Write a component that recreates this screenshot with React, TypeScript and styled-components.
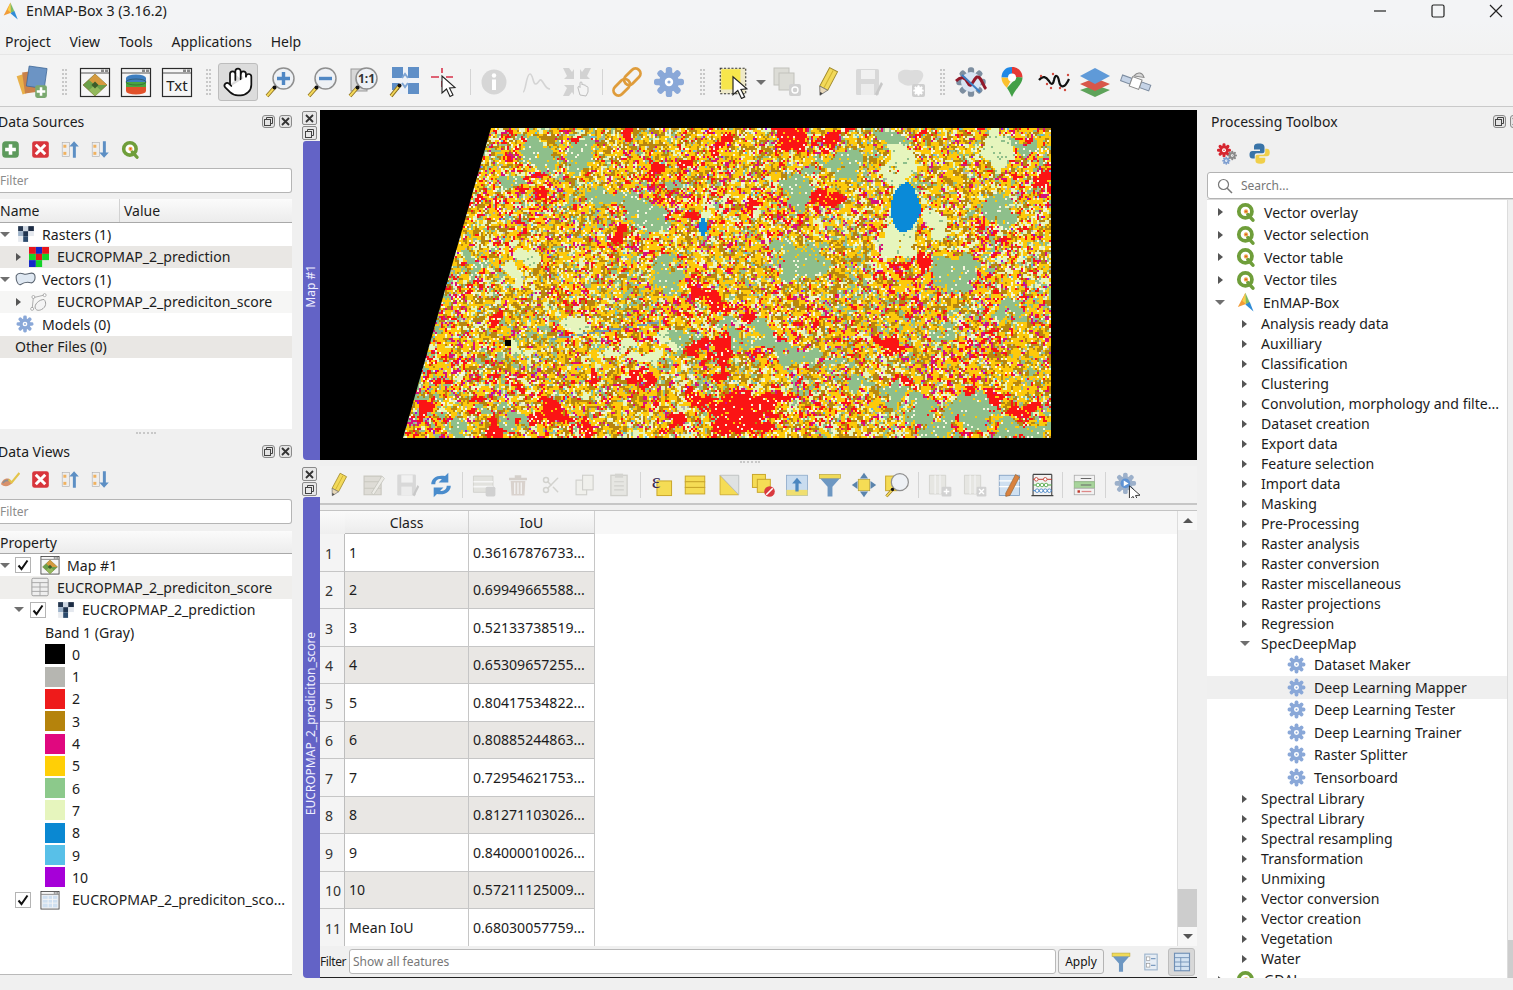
import React, {useEffect, useRef} from 'react'
import styled, {createGlobalStyle} from 'styled-components'
import {Hand, Scissors} from 'lucide-react'

const GlobalStyle = createGlobalStyle`
  html, body { margin: 0; padding: 0; background: #f0f0f0; overflow: hidden; }
  body { font-family: "Noto Sans", "Open Sans", "Liberation Sans", sans-serif; font-size: 14.1px; color: #1c1c1c; }
`

const Window = styled.div`
  width: 1513px;
  height: 990px;
  display: flex;
  flex-direction: column;
  overflow: hidden;
  background: #f0f0f0;
`

const TitleBar = styled.div`
  width: 1525px;
  height: 21px;
  display: flex;
  align-items: center;
  background: #f3f4f6;
  font-size: 14.2px;
`
const TitleText = styled.span`
  margin-left: 6px;
  flex: 1;
`
const WinBtn = styled.div`
  width: 58px;
  display: flex;
  justify-content: center;
`
const MenuBar = styled.div`
  height: 33px;
  box-sizing: border-box;
  padding: 8px 0 0 5px;
  display: flex;
  gap: 18.7px;
  align-items: center;
  background: linear-gradient(#f3f4f6, #f2f2f2);
  font-size: 14px;
`
const ToolBar = styled.div`
  height: 53px;
  box-sizing: border-box;
  padding: 3px 0 0 11px;
  display: flex;
  align-items: center;
  background: #f3f3f3;
  border-top: 1px solid #e6e6e6;
  border-bottom: 1px solid #c9c9c9;
`
const Slot = styled.div<{$w: number; $on?: boolean}>`
  width: ${p => p.$w}px;
  height: 38px;
  flex: none;
  box-sizing: border-box;
  display: flex;
  align-items: center;
  justify-content: center;
  border-radius: 3px;
  ${p => (p.$on ? 'background: #dcdcdc; border: 1px solid #bdbdbd;' : '')}
`
const GripLine = styled.div`
  width: 5px;
  height: 26px;
  border-left: 2px dotted #c8c8c8;
  border-right: 2px dotted #c8c8c8;
  box-sizing: border-box;
`
const SepLine = styled.div`
  width: 1px;
  height: 26px;
  background: #d4d4d4;
`
const Main = styled.div`
  height: 871px;
  display: flex;
`
const LeftDock = styled.div`
  width: 292px;
  flex: none;
  display: flex;
  flex-direction: column;
`
const PanelA = styled.div`
  height: 322px;
  display: flex;
  flex-direction: column;
`
const PanelB = styled.div`
  height: 536px;
  display: flex;
  flex-direction: column;
`
const HSplit = styled.div`
  height: 10px;
  flex: none;
  display: flex;
  align-items: flex-end;
  justify-content: center;
  box-sizing: border-box;
  padding-bottom: 3px;
  &::after {
    content: '';
    width: 20px;
    height: 2px;
    border-top: 2px dotted #c8c8c8;
  }
`
const VSplit = styled.div`
  width: 10px;
  flex: none;
`
const DockTitle = styled.div<{$h: number}>`
  height: ${p => p.$h}px;
  flex: none;
  display: flex;
  align-items: center;
  font-size: 14px;
`
const DockTitleText = styled.span`
  flex: 1;
`
const LeftTitleText = styled(DockTitleText)`
  margin-left: -2px;
`
const DockBtns = styled.div`
  display: flex;
  gap: 4px;
`
const DockBtn = styled.div`
  width: 13px;
  height: 13px;
  box-sizing: border-box;
  border: 1px solid #8a8a8a;
  border-radius: 3px;
  background: #e4e4e4;
  display: flex;
  align-items: center;
  justify-content: center;
`
const IconRow = styled.div<{$h: number}>`
  height: ${p => p.$h}px;
  flex: none;
  display: flex;
  align-items: center;
  gap: 11px;
  padding-left: 1px;
`
const FilterBox = styled.div<{$mt: number}>`
  height: 25px;
  flex: none;
  margin-top: ${p => p.$mt}px;
  box-sizing: border-box;
  background: #fff;
  border: 1px solid #b5b5b5;
  border-left: none;
  border-radius: 0 3px 3px 0;
  color: #8c8c8c;
  font-size: 12px;
  display: flex;
  align-items: center;
`
const TreeHead = styled.div<{$mt: number; $h: number}>`
  height: ${p => p.$h}px;
  flex: none;
  margin-top: ${p => p.$mt}px;
  display: flex;
  align-items: center;
  background: linear-gradient(#fbfbfb, #ececec);
  border-bottom: 1px solid #a9a9a9;
  font-size: 14px;
`
const HeadCell = styled.div<{$w?: number; $pl?: number}>`
  ${p => (p.$w ? `width: ${p.$w}px;` : 'flex: 1;')}
  box-sizing: border-box;
  height: 100%;
  display: flex;
  align-items: center;
  padding-left: ${p => p.$pl ?? 0}px;
  border-right: ${p => (p.$w ? '1px solid #d2d2d2' : 'none')};
`
const TreeArea = styled.div<{$line?: boolean}>`
  flex: 1;
  min-height: 0;
  background: #fff;
  overflow: hidden;
  ${p => (p.$line ? 'border-bottom: 1px solid #b9b9b9;' : '')}
`
const Row = styled.div<{$h?: number; $bg?: string}>`
  height: ${p => p.$h ?? 22.5}px;
  display: flex;
  align-items: center;
  white-space: nowrap;
  background: ${p => p.$bg ?? 'transparent'};
`
const Lead = styled.div<{$w: number; $ml?: number}>`
  width: ${p => p.$w}px;
  margin-left: ${p => p.$ml ?? 0}px;
  flex: none;
  display: flex;
  align-items: center;
  justify-content: center;
`
const Label = styled.span<{$ml?: number}>`
  margin-left: ${p => p.$ml ?? 0}px;
`
const Tri = styled.span<{$open?: boolean}>`
  width: 0;
  height: 0;
  display: block;
  ${p =>
    p.$open
      ? 'border-left: 5px solid transparent; border-right: 5px solid transparent; border-top: 5px solid #6f6f6f;'
      : 'border-top: 4.5px solid transparent; border-bottom: 4.5px solid transparent; border-left: 5px solid #555;'}
`
const Check = styled.div`
  width: 16px;
  height: 16px;
  box-sizing: border-box;
  background: #fff;
  border: 1px solid #b4b4b4;
  display: flex;
  align-items: center;
  justify-content: center;
`
const Swatch = styled.div<{$c: string}>`
  width: 20px;
  height: 20px;
  background: ${p => p.$c};
`
const CenterDock = styled.div`
  width: 895px;
  flex: none;
  display: flex;
  flex-direction: column;
  padding-top: 3px;
  box-sizing: border-box;
`
const MapDock = styled.div`
  height: 350px;
  flex: none;
  display: flex;
`
const Side = styled.div`
  width: 18px;
  flex: none;
  display: flex;
  flex-direction: column;
  align-items: flex-start;
`
const SideBtn = styled.div`
  width: 15px;
  height: 14px;
  margin-top: 1px;
  box-sizing: border-box;
  border: 1px solid #8a8a8a;
  border-radius: 2px;
  background: #e8e8e8;
  display: flex;
  align-items: center;
  justify-content: center;
`
const SideTab = styled.div`
  flex: 1;
  width: 17px;
  margin: 1px 0 0 1px;
  padding: 0 3px 28px 0;
  box-sizing: border-box;
  background: #6363c6;
  border-radius: 3px 0 0 4px;
  display: flex;
  align-items: center;
  justify-content: center;
`
const SideLabel = styled.span`
  writing-mode: vertical-rl;
  transform: rotate(180deg);
  color: #eef;
  font-size: 12px;
  white-space: nowrap;
`
const MapCanvas = styled.canvas`
  display: block;
  width: 877px;
  height: 350px;
  background: #000;
  filter: blur(0.5px);
`
const CSplit = styled.div`
  height: 6px;
  flex: none;
  display: flex;
  justify-content: center;
  padding-top: 1px;
  box-sizing: border-box;
  &::after {
    content: '';
    width: 20px;
    height: 2px;
    border-top: 2px dotted #c8c8c8;
  }
`
const AttrDock = styled.div`
  height: 512px;
  flex: none;
  display: flex;
`
const AttrBody = styled.div`
  flex: 1;
  min-width: 0;
  display: flex;
  flex-direction: column;
  border-bottom: 1px solid #222;
`
const AttrTools = styled.div`
  height: 39px;
  flex: none;
  box-sizing: border-box;
  display: flex;
  align-items: center;
  background: #f2f2f2;
  border-bottom: 2px solid #c6c6c6;
`
const TableWrap = styled.div`
  flex: 1;
  min-height: 0;
  margin-top: 5px;
  display: flex;
  background: #fff;
  border-top: 1px solid #c4c4c4;
`
const TablePane = styled.div`
  flex: 1;
  min-width: 0;
  overflow: hidden;
`
const THead = styled.div`
  height: 23px;
  display: flex;
  background: #f7f7f7;
`
const TRow = styled.div`
  height: 37.5px;
  display: flex;
`
const Corner = styled.div`
  width: 25px;
  background: linear-gradient(#fafafa, #efefef);
  box-sizing: border-box;
  flex: none;
`
const TH = styled.div<{$w: number}>`
  width: ${p => p.$w}px;
  flex: none;
  box-sizing: border-box;
  display: flex;
  align-items: center;
  justify-content: center;
  background: linear-gradient(#fafafa, #ececec);
  border-right: 1px solid #cfcfcf;
  border-bottom: 1px solid #bcbcbc;
  font-size: 14px;
`
const RowNum = styled.div`
  width: 25px;
  flex: none;
  box-sizing: border-box;
  display: flex;
  align-items: center;
  padding: 2px 0 0 5px;
  background: #f4f4f4;
  border-right: 1px solid #bdbdbd;
  border-bottom: 1px solid #c6c6c6;
  color: #333;
`
const TD = styled.div<{$w: number; $alt: boolean}>`
  width: ${p => p.$w}px;
  flex: none;
  box-sizing: border-box;
  display: flex;
  align-items: center;
  padding-left: 4px;
  background: ${p => (p.$alt ? '#e9e7e4' : '#fff')};
  border-right: 1px solid #c6c6c6;
  border-bottom: 1px solid #c6c6c6;
`
const ScrollBar = styled.div<{$w: number}>`
  width: ${p => p.$w}px;
  flex: none;
  display: flex;
  flex-direction: column;
  background: #f0f0f0;
  border-left: 1px solid #dcdcdc;
  box-sizing: border-box;
`
const ScrollBtn = styled.div`
  height: 19px;
  flex: none;
  display: flex;
  align-items: center;
  justify-content: center;
  background: #f7f7f7;
`
const ScrollTrack = styled.div`
  flex: 1;
  display: flex;
  flex-direction: column;
  justify-content: flex-end;
`
const ScrollThumb = styled.div`
  height: 38px;
  background: #cdcdcd;
`
const UpTri = styled.span`
  border-left: 5px solid transparent;
  border-right: 5px solid transparent;
  border-bottom: 5px solid #555;
`
const DownTri = styled.span`
  border-left: 5px solid transparent;
  border-right: 5px solid transparent;
  border-top: 5px solid #555;
`
const FilterBar = styled.div`
  height: 31px;
  flex: none;
  display: flex;
  align-items: center;
  font-size: 12px;
`
const FilterLabel = styled.span`
  width: 29px;
  flex: none;
  letter-spacing: -0.4px;
`
const FilterInput = styled.div`
  flex: 1;
  height: 25px;
  box-sizing: border-box;
  padding-left: 3px;
  display: flex;
  align-items: center;
  background: #fff;
  border: 1px solid #b9b9b9;
  border-radius: 3px;
  color: #777;
`
const ApplyBtn = styled.div`
  width: 46px;
  height: 25px;
  box-sizing: border-box;
  margin-left: 2px;
  display: flex;
  align-items: center;
  justify-content: center;
  background: #f1f1f1;
  border: 1px solid #b4b4b4;
  border-radius: 3px;
  color: #111;
`
const FilterIcon = styled.div<{$w: number; $on?: boolean}>`
  width: ${p => p.$w}px;
  height: 28px;
  margin: 0 ${p => (p.$on ? 2 : 0)}px 0 ${p => (p.$on ? 4 : 0)}px;
  box-sizing: border-box;
  display: flex;
  align-items: center;
  justify-content: center;
  border-radius: 3px;
  ${p => (p.$on ? 'background: #d8d8d8; border: 1px solid #bdbdbd;' : '')}
`
const RightDock = styled.div`
  width: 306px;
  flex: none;
  display: flex;
  flex-direction: column;
  overflow: hidden;
`
const RightTitle = styled.div`
  height: 28px;
  flex: none;
  width: 316px;
  padding-left: 4px;
  box-sizing: border-box;
  display: flex;
  align-items: center;
  font-size: 14px;
`
const RightIcons = styled.div`
  height: 37px;
  flex: none;
  display: flex;
  align-items: center;
  padding-left: 8px;
  gap: 9px;
`
const SearchBox = styled.div`
  height: 27px;
  width: 330px;
  flex: none;
  box-sizing: border-box;
  display: flex;
  align-items: center;
  padding-left: 9px;
  gap: 8px;
  background: #fff;
  border: 1px solid #b3b3b3;
  border-radius: 3px;
  color: #777;
  font-size: 12px;
`
const RightList = styled.div`
  flex: 1;
  min-height: 0;
  display: flex;
  background: #fff;
  border-top: 1px solid #dadada;
`
const RightTree = styled.div`
  width: 300px;
  flex: none;
  overflow: hidden;
  padding-top: 1px;
  box-sizing: border-box;
`
const Strip = styled.div`
  flex: 1;
  background: #f0f0f0;
`
const Svg = styled.svg<{$s: number}>`
  width: ${p => p.$s}px;
  height: ${p => p.$s}px;
  display: block;
  flex: none;
`

type IcProps = {s?: number; children?: React.ReactNode}
const Ic = ({s = 32, children}: IcProps) => (
  <Svg $s={s} viewBox="0 0 32 32">
    {children}
  </Svg>
)

// shared drawing parts, all on a 32 grid
const Cursor = ({x = 0, y = 0}: {x?: number; y?: number}) => (
  <path transform={`translate(${x} ${y})`} d="M0 0 L0 17 L4.5 13 L8 20.5 L11 19 L7.5 12 L13 11.5 Z" fill="#fff" stroke="#222" strokeWidth="1.1" />
)
const Mag = ({children}: {children?: React.ReactNode}) => (
  <>
    <line x1="11" y1="21" x2="3" y2="30" stroke="#8a6d1c" strokeWidth="3.6" />
    <line x1="10" y1="22" x2="3" y2="30" stroke="#f2d75a" strokeWidth="2" />
    <circle cx="19.5" cy="12.5" r="10.5" fill="#eef1f5" stroke="#8f8f8f" strokeWidth="1.5" />
    <circle cx="10.5" cy="21.5" r="2" fill="#111" />
    {children}
  </>
)
const Frame = ({children}: {children?: React.ReactNode}) => (
  <>
    <rect x="1.5" y="2.5" width="29" height="28" fill="#f6f6f6" stroke="#2b2b2b" strokeWidth="1.2" />
    <line x1="2" y1="7" x2="30" y2="7" stroke="#555" />
    <rect x="22" y="3.5" width="3" height="2.5" fill="#888" />
    <rect x="26" y="3.5" width="3" height="2.5" fill="#888" />
    {children}
  </>
)
const GearShape = ({c = '#8aa8d8', cx = 16, cy = 16, r = 1}: {c?: string; cx?: number; cy?: number; r?: number}) => (
  <g transform={`translate(${cx} ${cy}) scale(${r})`}>
    {[0, 45, 90, 135].map(a => (
      <rect key={a} x="-3.2" y="-15" width="6.4" height="30" rx="2.6" fill={c} transform={`rotate(${a})`} />
    ))}
    <circle r="10" fill={c} />
    <circle r="4.2" fill="#fff" />
    <circle r="1.6" fill={c} />
  </g>
)
const GearIc = ({s = 20}: {s?: number}) => (
  <Ic s={s}>
    <GearShape />
  </Ic>
)
const QLogo = ({s = 20}: {s?: number}) => (
  <Ic s={s}>
    <circle cx="15" cy="15" r="10.5" fill="#fff" stroke="#6f9e3a" strokeWidth="6" />
    <path d="M19 20 L27 29" stroke="#6f9e3a" strokeWidth="5.5" strokeLinecap="round" />
    <circle cx="16" cy="15" r="3.5" fill="#efb04e" />
    <circle cx="16" cy="15" r="1.4" fill="#d8472b" />
  </Ic>
)
const EnmapLogo = ({s = 20}: {s?: number}) => (
  <Ic s={s}>
    <polygon points="15,1 16,19 3,24" fill="#f29c38" />
    <polygon points="15,1 10,14 16,19" fill="#f5d24a" />
    <polygon points="15,1 16,19 22,17" fill="#7dbb64" />
    <polygon points="16,19 22,16 28,31 15,20" fill="#2f8bd6" />
    <polygon points="15,1 22,16 26,24" fill="#45b4a0" />
  </Ic>
)
const Checker = ({s = 18}: {s?: number}) => (
  <Ic s={s}>
    <rect x="2" y="2" width="9" height="9" fill="#24364f" />
    <rect x="11" y="2" width="9" height="9" fill="#cfd8e3" />
    <rect x="20" y="2" width="10" height="9" fill="#1c2c44" />
    <rect x="2" y="11" width="9" height="9" fill="#9db2c9" />
    <rect x="11" y="11" width="9" height="9" fill="#1f3450" />
    <rect x="20" y="11" width="10" height="9" fill="#e4e8ee" />
    <rect x="2" y="20" width="9" height="10" fill="#e8ebf0" />
    <rect x="11" y="20" width="9" height="10" fill="#2b4a6d" />
    <rect x="20" y="20" width="10" height="10" fill="#fff" />
  </Ic>
)
const ColorRaster = () => (
  <Ic s={20}>
    <rect x="0" y="0" width="11" height="11" fill="#e8141c" />
    <rect x="11" y="0" width="10" height="11" fill="#1428c8" />
    <rect x="21" y="0" width="11" height="11" fill="#e8141c" />
    <rect x="0" y="11" width="11" height="10" fill="#14d228" />
    <rect x="11" y="11" width="10" height="10" fill="#e8141c" />
    <rect x="21" y="11" width="11" height="10" fill="#14d228" />
    <rect x="0" y="21" width="11" height="11" fill="#1428c8" />
    <rect x="11" y="21" width="10" height="11" fill="#14d228" />
  </Ic>
)
const VectorBlob = () => (
  <Ic s={21}>
    <path d="M2 10 C6 3 12 8 16 8 C22 8 27 3 30 9 C32 16 28 22 24 21 C18 19 14 20 8 24 C4 25 1 16 2 10 Z" fill="#dfe8f2" stroke="#59636f" strokeWidth="1.6" />
  </Ic>
)
const VectorLayer = () => (
  <Ic s={20}>
    <path d="M5 27 L7 9 L24 5" fill="none" stroke="#aaa" strokeWidth="1.5" />
    <path d="M10 26 C8 20 16 12 24 12 C28 16 28 24 20 28 C16 30 12 30 10 26 Z" fill="#f4f4f4" stroke="#999" strokeWidth="1.5" />
    <circle cx="7" cy="8" r="2.4" fill="#fff" stroke="#888" />
    <circle cx="25" cy="5" r="2.4" fill="#fff" stroke="#888" />
    <circle cx="5" cy="27" r="2.4" fill="#fff" stroke="#888" />
  </Ic>
)
const GrayTable = () => (
  <Ic s={20}>
    <rect x="3" y="2" width="26" height="28" rx="2" fill="#eee" stroke="#9a9a9a" strokeWidth="1.5" />
    <path d="M3 9 H29 M3 16 H29 M3 23 H29 M16 9 V30" stroke="#a5a5a5" strokeWidth="1.5" />
  </Ic>
)
const BlueTable = ({s = 20}: {s?: number}) => (
  <Ic s={s}>
    <Frame>
      <rect x="4" y="9" width="24" height="19" fill="#cfe0f1" />
      <path d="M4 15 H28 M4 21 H28 M13 9 V28 M20 9 V28" stroke="#f6f6f6" strokeWidth="1.4" />
    </Frame>
  </Ic>
)
const MapWin = ({s = 32}: {s?: number}) => (
  <Ic s={s}>
    <Frame>
      <polygon points="16,8 28,19 16,30 4,19" fill="#6ba04a" stroke="#7a5c1a" strokeWidth="0.6" />
      <polygon points="16,8 28,19 16,19 10,14" fill="#d69a3e" />
      <polygon points="16,19 10,24 16,30 22,24.5" fill="#93b95c" />
      <rect x="13.5" y="16.5" width="5" height="5" fill="#3d5c2a" transform="rotate(45 16 19)" />
    </Frame>
  </Ic>
)
const DbWin = () => (
  <Ic>
    <Frame>
      <ellipse cx="16" cy="12" rx="10" ry="3.6" fill="#3d7ec0" />
      <rect x="6" y="12" width="20" height="4" fill="#3d7ec0" />
      <rect x="6" y="16" width="20" height="5" fill="#4aa640" />
      <path d="M6 21 H26 V25 A10 3.6 0 0 1 6 25 Z" fill="#e2512a" />
      <ellipse cx="16" cy="16" rx="10" ry="3" fill="none" stroke="#2d3d2d" strokeWidth="0.5" />
    </Frame>
  </Ic>
)
const TxtWin = () => (
  <Ic>
    <Frame>
      <text x="16" y="25" fontSize="15" textAnchor="middle" fontFamily="Noto Sans, sans-serif" fill="#222">
        Txt
      </text>
    </Frame>
  </Ic>
)
const AddData = () => (
  <Ic s={34}>
    <rect x="4" y="8" width="14" height="18" fill="#e8b04a" transform="rotate(-18 11 17)" />
    <rect x="8" y="6" width="14" height="20" fill="#c9814a" transform="rotate(-8 15 16)" />
    <rect x="12" y="2" width="17" height="19" fill="#6c94c4" stroke="#3e6796" strokeWidth="0.7" transform="rotate(8 20 11)" />
    <rect x="19" y="19" width="11" height="12" rx="2" fill="#7aa86f" />
    <path d="M24.5 21 V29 M20.5 25 H28.5" stroke="#fff" strokeWidth="2.4" />
  </Ic>
)
const ZoomInIc = () => (
  <Ic>
    <Mag>
      <path d="M19.5 6 V19 M13 12.5 H26" stroke="#4f87c4" strokeWidth="3.4" />
    </Mag>
  </Ic>
)
const ZoomOutIc = () => (
  <Ic>
    <Mag>
      <path d="M13 12.5 H26" stroke="#4f87c4" strokeWidth="3.4" />
    </Mag>
  </Ic>
)
const ZoomOneIc = () => (
  <Ic>
    <rect x="4" y="3" width="16" height="22" fill="#d8d8d8" stroke="#999" />
    <Mag>
      <text x="19.5" y="17" fontSize="12" fontWeight="700" textAnchor="middle" fontFamily="Noto Sans, sans-serif" fill="#333">
        1:1
      </text>
    </Mag>
  </Ic>
)
const ZoomFullIc = () => (
  <Ic>
    <rect x="4" y="1" width="27" height="27" fill="#eef2f7" />
    {[[4, 1], [20, 1], [20, 17]].map(([x, y]) => (
      <rect key={x * 10 + y} x={x} y={y} width="11" height="11" fill="#5f8fc7" />
    ))}
    <rect x="4" y="17" width="7" height="7" fill="#5f8fc7" />
    <path d="M14 12 L17 8 L20 12 M14 17 L17 21 L20 17" stroke="#7fa6d4" strokeWidth="2" fill="none" />
    <line x1="12" y1="19" x2="3" y2="30" stroke="#8a6d1c" strokeWidth="3.6" />
    <line x1="11" y1="20" x2="3" y2="30" stroke="#f2d75a" strokeWidth="2" />
    <circle cx="11.5" cy="19.5" r="2" fill="#111" />
  </Ic>
)
const PickIc = () => (
  <Ic>
    <path d="M1 11 H9 M16 11 H23 M12 2 V7" stroke="#d8324a" strokeWidth="1.6" />
    <path d="M12 15 V21" stroke="#d8324a" strokeWidth="1.6" />
    <Cursor x={12} y={10} />
  </Ic>
)
const InfoIc = () => (
  <Ic>
    <circle cx="16" cy="16" r="12.5" fill="#d6d6d6" />
    <circle cx="16" cy="9.5" r="2.2" fill="#fff" />
    <rect x="14" y="13.5" width="4" height="10.5" fill="#fff" />
  </Ic>
)
const ProfileIc = () => (
  <Ic>
    <path d="M3 26 C6 26 6 8 10 8 C13 8 13 19 16 18 C19 17 19 13 21 14 C24 16 25 23 30 23" fill="none" stroke="#d4d4d4" strokeWidth="1.6" />
  </Ic>
)
const ArrowsHandIc = () => (
  <Ic>
    <g fill="#d2d2d2">
      <polygon points="2,2 8,2 11,6 13,3 13,13 3,13 6,10" />
      <polygon points="30,2 24,2 21,6 19,3 19,13 29,13 26,10" />
      <polygon points="2,30 8,30 11,26 13,29 13,19 3,19 6,22" />
    </g>
    <path d="M19 29 L17 22 C16.5 20 18.5 20 19 21.5 V17 C19 15.5 21 15.5 21 17 V19 C21.5 18 23 18 23 19.5 C23.5 18.5 25 19 25 20.5 C26 20 27 20.5 27 22 V26 L25 30 Z" fill="#f4f4f4" stroke="#bdbdbd" />
  </Ic>
)
const LinkIc = () => (
  <Ic>
    <g fill="none" stroke="#df9c3b" strokeWidth="2.8" transform="rotate(-45 16 16)">
      <rect x="-1" y="11" width="19" height="10" rx="5" />
      <rect x="14" y="11" width="19" height="10" rx="5" />
    </g>
  </Ic>
)
const SelectIc = () => (
  <Ic s={34}>
    <rect x="4" y="3" width="24" height="24" fill="#eee9c8" stroke="#333" strokeDasharray="2 1.5" />
    <rect x="5" y="4" width="18" height="19" fill="#f7e64c" />
    <Cursor x={16} y={11} />
  </Ic>
)
const CopyGrayIc = () => (
  <Ic>
    <rect x="3" y="2" width="15" height="17" fill="#dcdcd6" stroke="#c2c2bc" />
    <rect x="8" y="7" width="15" height="17" fill="#dcdcd6" stroke="#c2c2bc" />
    <rect x="18" y="18" width="12" height="12" rx="2" fill="#d0d0d0" />
    <circle cx="24" cy="24" r="3" fill="none" stroke="#fff" strokeWidth="1.4" />
  </Ic>
)
const PencilIc = () => (
  <Ic>
    <g transform="rotate(28 16 16)">
      <rect x="11.5" y="2" width="9" height="21" fill="#f2d95a" stroke="#a0892c" strokeWidth="0.9" />
      <line x1="16" y1="3" x2="16" y2="23" stroke="#d0b230" />
      <polygon points="11.5,23 20.5,23 16,31" fill="#e8d8b8" stroke="#777" strokeWidth="0.8" />
      <polygon points="14.5,28 17.5,28 16,31" fill="#444" />
    </g>
  </Ic>
)
const SaveGrayIc = () => (
  <Ic>
    <rect x="4" y="3" width="23" height="26" rx="1.5" fill="#d8d8d8" />
    <rect x="9" y="4" width="14" height="9" fill="#f1f1f1" />
    <rect x="9" y="18" width="13" height="11" fill="#ececec" />
    <path d="M23 28 L29 16 L31 18 L25 30 Z" fill="#c8c8c8" />
  </Ic>
)
const CloudGearIc = () => (
  <Ic>
    <path d="M3 10 C3 4 10 3 14 4 C19 5 22 3 26 5 C30 8 28 12 26 15 L22 19 C16 19 12 21 8 18 C4 16 3 14 3 10 Z" fill="#dcdcdc" />
    <rect x="17" y="18" width="13" height="13" rx="2" fill="#cfcfcf" />
    <GearShape c="#fff" cx={23.5} cy={24.5} r={0.35} />
  </Ic>
)
const SpectralIc = () => (
  <Ic>
    <GearShape c="#7d8ea0" r={0.98} />
    <circle cx="16" cy="16" r="10" fill="#d8e4f3" />
    <path d="M1 15 C6 10 10 11 13 17 C16 24 19 12 22 11 C26 10 28 20 31 23" fill="none" stroke="#93192a" strokeWidth="3" />
    <path d="M7 9 L25 26" stroke="#3e7fc4" strokeWidth="2" />
  </Ic>
)
const PinIc = () => (
  <Ic>
    <path d="M16 1 C9 1 5.5 6 5.5 11.5 L16 11.5 Z" fill="#1f88e5" />
    <path d="M16 1 C23 1 26.5 6 26.5 11.5 L16 11.5 Z" fill="#e53935" />
    <path d="M5.5 11.5 C5.5 16 8 19 11 22 L16 12 Z" fill="#fbc02d" />
    <path d="M26.5 11.5 C26.5 18 20 22 16 31 C14 27 12.5 24 11 22 L21 11 Z" fill="#43a047" />
    <circle cx="16" cy="11.5" r="4" fill="#fff" />
  </Ic>
)
const WaveIc = () => (
  <Ic>
    <path d="M1 14 C5 9 8 11 11 15 C13 19 15 19 16 14 C17 8 20 9 21 15 C22 21 26 24 31 13" fill="none" stroke="#111" strokeWidth="2.2" />
    {[[3, 10], [9, 18], [15, 8], [22, 22], [27, 24], [30, 9], [13, 22]].map(([x, y]) => (
      <circle key={x} cx={x} cy={y} r="1.2" fill="#d24a3e" />
    ))}
  </Ic>
)
const LayersIc = () => (
  <Ic>
    <polygon points="16,19 31,24 16,31 1,24" fill="#5ea35a" />
    <polygon points="16,12 31,18 16,25 1,18" fill="#d8564a" />
    <polygon points="16,2 31,10 16,18 1,10" fill="#5f9ad8" />
  </Ic>
)
const SatelliteIc = () => (
  <Ic>
    <g transform="rotate(20 16 16)">
      <rect x="1" y="14" width="10" height="6" fill="#c5d3e6" stroke="#7c8ca0" />
      <rect x="21" y="14" width="10" height="6" fill="#c5d3e6" stroke="#7c8ca0" />
      <rect x="11" y="12" width="10" height="10" fill="#fff" stroke="#8a8a8a" />
      <path d="M12 11 C14 5 19 5 22 9 Z" fill="#d8d8d8" stroke="#8a8a8a" />
    </g>
  </Ic>
)
const DockFloat = () => (
  <Svg $s={9} viewBox="0 0 9 9">
    <rect x="0.5" y="2.5" width="6" height="6" fill="none" stroke="#444" />
    <path d="M2.5 2 V0.5 H8.5 V6.5 H7" fill="none" stroke="#444" />
  </Svg>
)
const DockClose = () => (
  <Svg $s={9} viewBox="0 0 9 9">
    <path d="M1 1 L8 8 M8 1 L1 8" stroke="#333" strokeWidth="1.8" />
  </Svg>
)
const PlusGreen = () => (
  <Ic s={19}>
    <rect x="2" y="2" width="28" height="28" rx="6" fill="#5d9a5c" />
    <path d="M16 7 V25 M7 16 H25" stroke="#fff" strokeWidth="6" />
  </Ic>
)
const XRed = () => (
  <Ic s={19}>
    <rect x="2" y="2" width="28" height="28" rx="4" fill="#d8353c" />
    <path d="M8 8 L24 24 M24 8 L8 24" stroke="#fff" strokeWidth="5" />
  </Ic>
)
const TreeBase = () => (
  <>
    <rect x="2" y="4" width="12" height="24" fill="#eee" stroke="#aaa" />
    <rect x="4" y="8" width="5" height="5" fill="#f0b260" />
    <rect x="4" y="20" width="5" height="5" fill="#f0b260" />
  </>
)
const CollapseIc = () => (
  <Ic s={19}>
    <TreeBase />
    <path d="M20 30 V11 H14 L22 2 L30 11 H25 V30 Z" fill="#5d8fc4" />
  </Ic>
)
const ExpandIc = () => (
  <Ic s={19}>
    <TreeBase />
    <path d="M20 2 V21 H14 L22 30 L30 21 H25 V2 Z" fill="#5d8fc4" />
  </Ic>
)
const BrushIc = () => (
  <Ic s={19}>
    <path d="M0 24 C2 15 10 13 14 15 L19 22 C14 28 5 29 0 24 Z" fill="#d9916a" />
    <path d="M3 22 C6 18 10 17 13 18" fill="none" stroke="#8b8f95" strokeWidth="3" />
    <path d="M13 16 L18 21 L31 5" fill="none" stroke="#e3c44b" strokeWidth="3.6" />
  </Ic>
)
const CheckMark = () => (
  <Svg $s={12} viewBox="0 0 12 12">
    <path d="M1.5 6.5 L4.5 10 L10.5 1.5" fill="none" stroke="#111" strokeWidth="2" />
  </Svg>
)
const ProcGears = () => (
  <Ic s={24}>
    <GearShape c="#d6252f" cx={12} cy={11} r={0.62} />
    <GearShape c="#8a8a8a" cx={23} cy={18} r={0.42} />
    <GearShape c="#7f9fd0" cx={15} cy={25} r={0.36} />
  </Ic>
)
const PythonIc = () => (
  <Ic s={24}>
    <path d="M15 2 C9 2 8 4 8 7 V10 H16 V12 H6 C3 12 2 14 2 17 C2 20 3 22 6 22 H9 V18 C9 16 10 15 12 15 H19 C21 15 22 14 22 12 V7 C22 4 20 2 15 2 Z" fill="#3a74a8" />
    <path d="M16 29 C22 29 23 27 23 24 V21 H15 V19 H25 C28 19 29 17 29 14 C29 11 28 9 25 9 H23 V13 C23 15 22 17 20 17 H13 C11 17 10 18 10 20 V25 C10 28 12 29 16 29 Z" fill="#f0cf4a" />
  </Ic>
)
const SearchGlass = () => (
  <Svg $s={16} viewBox="0 0 16 16">
    <circle cx="6.5" cy="6.5" r="5" fill="none" stroke="#777" strokeWidth="1.2" />
    <path d="M10.2 10.2 L15 15" stroke="#777" strokeWidth="1.5" />
  </Svg>
)

// attribute table toolbar
const S = 26
const EditMulti = () => (
  <Ic s={S}>
    <path d="M5 5 H26 V28 H5 Z M5 12 H26 M5 20 H26" fill="#dedcd6" stroke="#c9c7c0" strokeWidth="1.4" />
    <path d="M14 26 L27 5 L30 8 L17 28 Z" fill="#ecebe6" stroke="#c4c4bc" />
  </Ic>
)
const Reload = () => (
  <Ic s={S}>
    <path d="M4 15 C4 7 12 3 21 5 L25 1 V13 H13 L17 9 C13 8 9 10 9 15 Z" fill="#4a8ccc" />
    <path d="M28 17 C28 25 20 29 11 27 L7 31 V19 H19 L15 23 C19 24 23 22 23 17 Z" fill="#4a8ccc" />
  </Ic>
)
const GrayAddRow = () => (
  <Ic s={S}>
    <path d="M3 5 H27 V25 H3 Z" fill="#e2e2de" stroke="#cdcdc8" />
    <path d="M3 12 H27 M3 18 H27" stroke="#f6f6f6" strokeWidth="2" />
    <rect x="18" y="18" width="12" height="12" rx="2" fill="#d0d0d0" />
  </Ic>
)
const Trash = () => (
  <Ic s={S}>
    <path d="M5 7 H27 V10 H5 Z M12 4 H20 V7 H12 Z" fill="#d4cfca" />
    <path d="M7 11 H25 L24 29 H8 Z" fill="#d9d2cd" />
    <path d="M12 13 V27 M16 13 V27 M20 13 V27" stroke="#f4f4f4" strokeWidth="1.6" />
  </Ic>
)
const CopyPage = () => (
  <Ic s={S}>
    <rect x="5" y="10" width="13" height="18" fill="#f0f0ec" stroke="#d0d0cc" strokeWidth="1.4" />
    <rect x="13" y="4" width="13" height="18" fill="#f0f0ec" stroke="#d0d0cc" strokeWidth="1.4" />
  </Ic>
)
const Paste = () => (
  <Ic s={S}>
    <rect x="6" y="4" width="20" height="25" fill="#e6e6e2" stroke="#cfcfca" strokeWidth="1.6" />
    <rect x="11" y="2" width="10" height="5" fill="#d4d4d0" />
    <path d="M10 12 H22 M10 17 H22 M10 22 H22" stroke="#d0d0cc" strokeWidth="1.4" />
  </Ic>
)
const YBox = ({x, y, w, h}: {x: number; y: number; w: number; h: number}) => (
  <rect x={x} y={y} width={w} height={h} fill="#f5dc55" stroke="#c9a62a" strokeWidth="1.2" />
)
const EpsSelect = () => (
  <Ic s={S}>
    <YBox x={11} y={11} w={18} h={18} />
    <text x="10" y="20" fontSize="26" textAnchor="middle" fontFamily="Liberation Serif, serif" fill="#3a2a55">
      ε
    </text>
  </Ic>
)
const YRows = () => (
  <Ic s={S}>
    <YBox x={4} y={5} w={24} h={7} />
    <YBox x={4} y={12} w={24} h={7} />
    <YBox x={4} y={19} w={24} h={8} />
  </Ic>
)
const Invert = () => (
  <Ic s={S}>
    <polygon points="5,4 5,28 28,28" fill="#f5dc55" stroke="#c9a62a" />
    <polygon points="5,4 28,4 28,28" fill="#dfe2e2" stroke="#b8bcbc" />
  </Ic>
)
const Deselect = () => (
  <Ic s={S}>
    <YBox x={3} y={3} w={16} h={16} />
    <YBox x={9} y={9} w={16} h={16} />
    <circle cx="24" cy="24" r="6.5" fill="#d93a3f" />
    <path d="M20 28 L28 20" stroke="#fff" strokeWidth="2" />
  </Ic>
)
const MoveTop = () => (
  <Ic s={S}>
    <rect x="3" y="4" width="26" height="25" fill="#c9dcef" stroke="#8eaac8" />
    <rect x="3" y="22" width="26" height="7" fill="#f0df70" />
    <path d="M14 24 V14 H10 L16 7 L22 14 H18 V24 Z" fill="#4a86c0" />
  </Ic>
)
const Funnel = ({s = S}: {s?: number}) => (
  <Ic s={s}>
    <rect x="3" y="3" width="26" height="5" fill="#f0da58" stroke="#b7a238" strokeWidth="0.8" />
    <path d="M4 8 H28 L19 18 V30 H13 V18 Z" fill="#6d97c2" />
  </Ic>
)
const PanArrows = () => (
  <Ic s={S}>
    <rect x="9" y="9" width="14" height="14" fill="#f5dc55" stroke="#b7a238" />
    <g fill="#5a84ad">
      <polygon points="16,1 21,8 11,8" />
      <polygon points="16,31 21,24 11,24" />
      <polygon points="1,16 8,11 8,21" />
      <polygon points="31,16 24,11 24,21" />
    </g>
  </Ic>
)
const ZoomSel = () => (
  <Ic s={S}>
    <YBox x={2} y={5} w={14} h={18} />
    <Mag />
  </Ic>
)
const GrayField = ({x}: {x?: boolean}) => (
  <Ic s={S}>
    <path d="M3 4 H23 V27 H3 Z" fill="#e6e6e2" stroke="#cfcfca" />
    <path d="M10 4 V27 M16 4 V27" stroke="#f4f4f4" strokeWidth="1.5" />
    <rect x="18" y="18" width="12" height="12" rx="1.5" fill="#d2d2d2" />
    <path d={x ? 'M21 21 L27 27 M27 21 L21 27' : 'M24 20.5 V27.5 M20.5 24 H27.5'} stroke="#fff" strokeWidth="1.8" />
  </Ic>
)
const FieldCalcEdit = () => (
  <Ic s={S}>
    <rect x="4" y="4" width="25" height="25" fill="#cfe0f1" stroke="#7c9cc0" />
    <path d="M4 11 H29 M4 18 H29" stroke="#fff" strokeWidth="1.5" />
    <path d="M12 26 L24 3 L29 6 L17 29 L12 30 Z" fill="#d9823f" stroke="#8a5a2a" strokeWidth="0.7" />
  </Ic>
)
const Abacus = () => (
  <Ic s={S}>
    <path d="M3 29 H30 M5 3 V29 M28 3 V29 M5 3 H28" stroke="#444" strokeWidth="1.4" fill="none" />
    <path d="M5 9 H28" stroke="#c0392b" strokeWidth="1.2" />
    <path d="M5 16 H28" stroke="#4aa640" strokeWidth="1.2" />
    <path d="M5 23 H28" stroke="#3e7fc4" strokeWidth="1.2" />
    {[9, 20].map(x => (
      <circle key={x} cx={x} cy={9} r="2.2" fill="#fff" stroke="#c0392b" />
    ))}
    {[11, 16, 21].map(x => (
      <circle key={x} cx={x} cy={16} r="2.2" fill="#fff" stroke="#4aa640" />
    ))}
    {[10, 15, 20, 25].map(x => (
      <circle key={x} cx={x} cy={23} r="2.2" fill="#fff" stroke="#3e7fc4" />
    ))}
  </Ic>
)
const CondForm = () => (
  <Ic s={S}>
    <rect x="4" y="4" width="25" height="8" fill="#f2f2f2" stroke="#aaa" />
    <rect x="4" y="12" width="25" height="8" fill="#a7d49b" stroke="#8fb883" />
    <rect x="4" y="20" width="25" height="8" fill="#f2f2f2" stroke="#aaa" />
    <path d="M12 8 H25 M12 16 H25" stroke="#666" strokeWidth="1.4" />
    <rect x="8" y="22.5" width="3" height="3" fill="#c0392b" />
    <path d="M13 24 H25" stroke="#d88" strokeWidth="1.6" />
  </Ic>
)
const ActionGear = () => (
  <Ic s={S}>
    <GearShape c="#9cb0ca" cx={14} cy={14} r={0.88} />
    <circle cx="14" cy="14" r="6" fill="#5e93d4" />
    <polygon points="12,10.5 18,14 12,17.5" fill="#fff" />
    <Cursor x={19} y={17} />
  </Ic>
)

const legend: [string, string][] = [
  ['0', '#000000'],
  ['1', '#b6b6b1'],
  ['2', '#ee1b1b'],
  ['3', '#b5830c'],
  ['4', '#e0087f'],
  ['5', '#ffcf06'],
  ['6', '#8cc98b'],
  ['7', '#e6f5bd'],
  ['8', '#0a88d2'],
  ['9', '#58c0e8'],
  ['10', '#a600d8'],
]

const iou = [
  ['1', '0.36167876733...'],
  ['2', '0.69949665588...'],
  ['3', '0.52133738519...'],
  ['4', '0.65309657255...'],
  ['5', '0.80417534822...'],
  ['6', '0.80885244863...'],
  ['7', '0.72954621753...'],
  ['8', '0.81271103026...'],
  ['9', '0.84000010026...'],
  ['10', '0.57211125009...'],
  ['Mean IoU', '0.68030057759...'],
]

const groupsA = [
  'Analysis ready data',
  'Auxilliary',
  'Classification',
  'Clustering',
  'Convolution, morphology and filte...',
  'Dataset creation',
  'Export data',
  'Feature selection',
  'Import data',
  'Masking',
  'Pre-Processing',
  'Raster analysis',
  'Raster conversion',
  'Raster miscellaneous',
  'Raster projections',
  'Regression',
]
const groupsB = [
  'Spectral Library',
  'Spectral Library',
  'Spectral resampling',
  'Transformation',
  'Unmixing',
  'Vector conversion',
  'Vector creation',
  'Vegetation',
  'Water',
]
const algos = ['Dataset Maker', 'Deep Learning Mapper', 'Deep Learning Tester', 'Deep Learning Trainer', 'Raster Splitter', 'Tensorboard']
const qgisGroups = ['Vector overlay', 'Vector selection', 'Vector table', 'Vector tiles']

// page coordinates of the land cover patches: [x, y, rx, ry]
type Blob = [number, number, number, number]
const GREEN: Blob[] = [
  [543, 157, 17, 16], [580, 153, 11, 20], [513, 178, 13, 7], [603, 193, 20, 8], [633, 200, 16, 10], [647, 220, 26, 12],
  [670, 273, 16, 15], [473, 267, 6, 15], [720, 323, 10, 8], [677, 343, 12, 15], [803, 190, 20, 15], [843, 163, 26, 8],
  [800, 260, 25, 22], [953, 270, 25, 12], [887, 133, 18, 9], [1020, 140, 12, 9], [760, 327, 10, 14], [937, 333, 10, 8],
  [1003, 310, 16, 8], [970, 410, 26, 14], [730, 343, 14, 10], [760, 345, 18, 8], [795, 352, 20, 8], [830, 362, 16, 6],
  [860, 378, 16, 7], [890, 395, 16, 8], [920, 410, 14, 9], [940, 425, 18, 9], [1020, 428, 30, 8], [487, 410, 14, 6],
  [517, 420, 16, 8], [460, 430, 10, 5], [993, 210, 20, 14],
]
const PALE: Blob[] = [
  [897, 165, 13, 25], [895, 232, 20, 27], [930, 222, 15, 10], [995, 148, 20, 14], [1000, 160, 14, 8], [580, 320, 10, 6],
  [515, 343, 10, 3], [617, 347, 15, 5], [640, 360, 15, 6], [667, 337, 10, 12], [530, 257, 12, 6], [513, 273, 5, 10],
  [702, 215, 10, 10],
]
const RED: Blob[] = [
  [740, 413, 42, 26], [780, 393, 15, 10], [823, 198, 18, 14], [790, 140, 14, 11], [833, 135, 12, 9], [920, 132, 12, 5],
  [890, 343, 10, 10], [747, 317, 6, 8], [808, 322, 5, 5], [753, 207, 10, 12], [768, 237, 8, 6], [722, 363, 10, 15],
  [903, 383, 15, 6], [987, 397, 18, 8], [1017, 410, 20, 10], [1043, 177, 8, 8], [923, 257, 10, 8], [903, 270, 6, 6],
  [650, 173, 10, 8], [685, 167, 12, 10], [537, 192, 10, 8], [557, 327, 6, 6], [490, 317, 10, 8], [697, 297, 12, 10],
  [717, 300, 10, 8], [697, 350, 10, 8], [717, 353, 10, 15], [590, 377, 10, 12], [645, 382, 10, 8], [550, 412, 20, 12],
  [480, 395, 12, 8], [517, 393, 7, 5], [417, 407, 8, 8], [477, 413, 10, 6], [503, 427, 10, 8], [587, 425, 10, 10],
  [700, 403, 20, 12], [667, 417, 8, 10], [620, 233, 6, 6], [690, 213, 6, 6], [573, 135, 6, 4], [622, 133, 4, 5], [720, 145, 8, 6],
]
const MAP_COLORS = {
  red: '#fb1414',
  brown: '#b8860e',
  pink: '#d8127c',
  yellow: '#fdc90a',
  green: '#8ebf8b',
  pale: '#e6f5bd',
  blue: '#0a8ad8',
  sky: '#5cbde6',
  purple: '#a10ed8',
  gray: '#b4b2a8',
  white: '#f7f7e0',
}

const hash = (x: number, y: number, k: number) => {
  const v = Math.sin(x * 127.1 + y * 311.7 + k * 74.7) * 43758.5453
  return v - Math.floor(v)
}
const noise = (x: number, y: number, k: number) => {
  const ix = Math.floor(x)
  const iy = Math.floor(y)
  const fx = x - ix
  const fy = y - iy
  const ux = fx * fx * (3 - 2 * fx)
  const uy = fy * fy * (3 - 2 * fy)
  const a = hash(ix, iy, k)
  const b = hash(ix + 1, iy, k)
  const c = hash(ix, iy + 1, k)
  const d = hash(ix + 1, iy + 1, k)
  return a + (b - a) * ux + (c - a) * uy + (a - b - c + d) * ux * uy
}
const inBlobs = (list: Blob[], x: number, y: number, wob: number) =>
  list.some(([cx, cy, rx, ry]) => {
    const dx = (x - cx) / rx
    const dy = (y - cy) / ry
    return dx * dx + dy * dy + wob < 1
  })

function paintMap(ctx: CanvasRenderingContext2D) {
  const ox = 320
  const oy = 110
  ctx.fillStyle = '#000'
  ctx.fillRect(0, 0, 877, 350)
  ctx.save()
  ctx.beginPath()
  ctx.moveTo(491 - ox, 128 - oy)
  ctx.lineTo(1051 - ox, 128 - oy)
  ctx.lineTo(1051 - ox, 438 - oy)
  ctx.lineTo(403 - ox, 438 - oy)
  ctx.closePath()
  ctx.clip()
  const step = 2
  for (let y = 128; y < 438; y += step) {
    for (let x = 403; x < 1051; x += step) {
      const r = hash(x, y, 11)
      // warp the blob lookup so patches get torn edges
      const wx = x + (noise(x / 14, y / 14, 30) - 0.5) * 22
      const wy = y + (noise(x / 14, y / 14, 31) - 0.5) * 22
      const wob = (noise(x / 6, y / 6, 9) - 0.5) * 1.1 + (noise(x / 2.5, y / 2.5, 10) - 0.5) * 0.8 + (hash(x, y, 12) - 0.5) * 0.45
      const redZone = (noise(x / 34, y / 34, 40) - 0.5) * 0.34
      const greenZone = (noise(x / 26, y / 26, 41) - 0.5) * 0.34
      const paleZone = (noise(x / 22, y / 22, 42) - 0.5) * 0.28
      const speck: [string, number, number][] = [
        [MAP_COLORS.yellow, 0.15, 1],
        [MAP_COLORS.brown, 0.07 - redZone * 0.4, 2],
        [MAP_COLORS.red, -0.03 + redZone, 3],
        [MAP_COLORS.pale, 0 + paleZone, 4],
        [MAP_COLORS.green, -0.03 + greenZone, 5],
        [MAP_COLORS.pink, -0.07 + redZone * 0.5, 6],
      ]
      let c = ''
      const lake = (wx * 0.3 + x * 0.7 - 903) / 15
      const lakeY = (wy * 0.3 + y * 0.7 - 207) / 24
      if (lake * lake + lakeY * lakeY < 1) c = MAP_COLORS.blue
      else if (((x - 702) / 3.5) ** 2 + ((y - 226) / 9) ** 2 < 1) c = MAP_COLORS.blue
      else if (((x - 507) / 3) ** 2 + ((y - 342) / 4) ** 2 < 1) c = '#000'
      else if (x > 550 && x < 665 && Math.abs(y - (338 - ((x - 550) * 18) / 115)) < 1 && r < 0.75) c = '#6f9ab0'
      else if (inBlobs(RED, wx, wy, wob + 0.15)) c = r < 0.9 ? MAP_COLORS.red : r < 0.95 ? MAP_COLORS.white : MAP_COLORS.yellow
      else if (inBlobs(PALE, wx, wy, wob * 0.7)) c = r < 0.95 ? MAP_COLORS.pale : MAP_COLORS.green
      else if (inBlobs(GREEN, wx, wy, wob)) c = r < 0.92 ? MAP_COLORS.green : r < 0.97 ? MAP_COLORS.white : MAP_COLORS.yellow
      else if (r < 0.004) c = MAP_COLORS.purple
      else if (r < 0.01) c = MAP_COLORS.sky
      else if (r < 0.03) c = MAP_COLORS.gray
      else if (r < 0.085) c = MAP_COLORS.white
      else {
        let best = -1
        for (const [col, w, k] of speck) {
          const v = noise(x / 3.2, y / 3.2, k) * 0.75 + hash(x, y, k + 20) * 0.3 + w
          if (v > best) {
            best = v
            c = col
          }
        }
      }
      ctx.fillStyle = c
      ctx.fillRect(x - ox, y - oy, step, step)
    }
  }
  ctx.restore()
}

const MapView = () => {
  const ref = useRef<HTMLCanvasElement>(null)
  useEffect(() => {
    const ctx = ref.current?.getContext('2d')
    if (ctx) paintMap(ctx)
  }, [])
  return <MapCanvas ref={ref} width={877} height={350} />
}

const tools: {w: number; on?: boolean; el: React.ReactNode}[] = [
  {w: 42, el: <AddData />},
  {w: 22, el: <GripLine />},
  {w: 40, el: <MapWin />},
  {w: 41, el: <DbWin />},
  {w: 42, el: <TxtWin />},
  {w: 20, el: <GripLine />},
  {w: 40, on: true, el: <Hand size={32} fill="#fff" color="#111" strokeWidth={1.3} />},
  {w: 43, el: <ZoomInIc />},
  {w: 41, el: <ZoomOutIc />},
  {w: 41, el: <ZoomOneIc />},
  {w: 42, el: <ZoomFullIc />},
  {w: 42, el: <PickIc />},
  {w: 6, el: <SepLine />},
  {w: 42, el: <InfoIc />},
  {w: 41, el: <ProfileIc />},
  {w: 42, el: <ArrowsHandIc />},
  {w: 8, el: <SepLine />},
  {w: 42, el: <LinkIc />},
  {w: 42, el: <Ic><GearShape /></Ic>},
  {w: 24, el: <GripLine />},
  {w: 54, el: <><SelectIc /><Lead $w={10} $ml={6}><Tri $open /></Lead></>},
  {w: 38, el: <CopyGrayIc />},
  {w: 41, el: <PencilIc />},
  {w: 42, el: <SaveGrayIc />},
  {w: 44, el: <CloudGearIc />},
  {w: 19, el: <GripLine />},
  {w: 38, el: <SpectralIc />},
  {w: 43, el: <PinIc />},
  {w: 41, el: <WaveIc />},
  {w: 42, el: <LayersIc />},
  {w: 40, el: <SatelliteIc />},
]

const attrTools: {w: number; el: React.ReactNode}[] = [
  {w: 36, el: <Ic s={S}><PencilIc /></Ic>},
  {w: 34, el: <EditMulti />},
  {w: 34, el: <Ic s={S}><SaveGrayIc /></Ic>},
  {w: 34, el: <Reload />},
  {w: 8, el: <SepLine />},
  {w: 35, el: <GrayAddRow />},
  {w: 33, el: <Trash />},
  {w: 34, el: <Scissors size={20} color="#d2d2ce" strokeWidth={1.8} />},
  {w: 33, el: <CopyPage />},
  {w: 36, el: <Paste />},
  {w: 7, el: <SepLine />},
  {w: 34, el: <EpsSelect />},
  {w: 33, el: <YRows />},
  {w: 35, el: <Invert />},
  {w: 34, el: <Deselect />},
  {w: 33, el: <MoveTop />},
  {w: 34, el: <Funnel />},
  {w: 33, el: <PanArrows />},
  {w: 34, el: <ZoomSel />},
  {w: 8, el: <SepLine />},
  {w: 36, el: <GrayField />},
  {w: 34, el: <GrayField x />},
  {w: 33, el: <FieldCalcEdit />},
  {w: 34, el: <Abacus />},
  {w: 6, el: <SepLine />},
  {w: 37, el: <CondForm />},
  {w: 6, el: <SepLine />},
  {w: 38, el: <ActionGear />},
]

export default function App() {
  return (
    <Window>
      <GlobalStyle />
      <TitleBar>
        <Lead $w={18} $ml={2}>
          <EnmapLogo s={18} />
        </Lead>
        <TitleText>EnMAP-Box 3 (3.16.2)</TitleText>
        <WinBtn>
          <Svg $s={14} viewBox="0 0 14 14">
            <path d="M1 7 H13" stroke="#222" strokeWidth="1.2" />
          </Svg>
        </WinBtn>
        <WinBtn>
          <Svg $s={14} viewBox="0 0 14 14">
            <rect x="1" y="1" width="12" height="12" rx="1.5" fill="none" stroke="#222" strokeWidth="1.2" />
          </Svg>
        </WinBtn>
        <WinBtn>
          <Svg $s={14} viewBox="0 0 14 14">
            <path d="M1 1 L13 13 M13 1 L1 13" stroke="#222" strokeWidth="1.2" />
          </Svg>
        </WinBtn>
      </TitleBar>
      <MenuBar>
        <span>Project</span>
        <span>View</span>
        <span>Tools</span>
        <span>Applications</span>
        <span>Help</span>
      </MenuBar>
      <ToolBar>
        {tools.map((t, i) => (
          <Slot key={i} $w={t.w} $on={t.on}>
            {t.el}
          </Slot>
        ))}
      </ToolBar>
      <Main>
        <LeftDock>
          <PanelA>
            <DockTitle $h={28}>
              <LeftTitleText>Data Sources</LeftTitleText>
              <DockBtns>
                <DockBtn>
                  <DockFloat />
                </DockBtn>
                <DockBtn>
                  <DockClose />
                </DockBtn>
              </DockBtns>
            </DockTitle>
            <IconRow $h={28}>
              <PlusGreen />
              <XRed />
              <CollapseIc />
              <ExpandIc />
              <QLogo s={19} />
            </IconRow>
            <FilterBox $mt={5}>Filter</FilterBox>
            <TreeHead $mt={6} $h={23}>
              <HeadCell $w={120}>Name</HeadCell>
              <HeadCell $pl={4}>Value</HeadCell>
            </TreeHead>
            <TreeArea>
              <Row>
                <Lead $w={9}>
                  <Tri $open />
                </Lead>
                <Lead $w={18} $ml={8}>
                  <Checker />
                </Lead>
                <Label $ml={7}>Rasters (1)</Label>
              </Row>
              <Row $bg="#e9e7e4">
                <Lead $w={8} $ml={14}>
                  <Tri />
                </Lead>
                <Lead $w={20} $ml={7}>
                  <ColorRaster />
                </Lead>
                <Label $ml={8}>EUCROPMAP_2_prediction</Label>
              </Row>
              <Row>
                <Lead $w={9}>
                  <Tri $open />
                </Lead>
                <Lead $w={21} $ml={6}>
                  <VectorBlob />
                </Lead>
                <Label $ml={6}>Vectors (1)</Label>
              </Row>
              <Row $bg="#f6f6f5">
                <Lead $w={8} $ml={14}>
                  <Tri />
                </Lead>
                <Lead $w={20} $ml={7}>
                  <VectorLayer />
                </Lead>
                <Label $ml={8}>EUCROPMAP_2_prediciton_score</Label>
              </Row>
              <Row>
                <Lead $w={18} $ml={16}>
                  <GearIc s={18} />
                </Lead>
                <Label $ml={8}>Models (0)</Label>
              </Row>
              <Row $bg="#e9e7e4">
                <Label $ml={15}>Other Files (0)</Label>
              </Row>
            </TreeArea>
          </PanelA>
          <HSplit />
          <PanelB>
            <DockTitle $h={24}>
              <LeftTitleText>Data Views</LeftTitleText>
              <DockBtns>
                <DockBtn>
                  <DockFloat />
                </DockBtn>
                <DockBtn>
                  <DockClose />
                </DockBtn>
              </DockBtns>
            </DockTitle>
            <IconRow $h={32}>
              <BrushIc />
              <XRed />
              <CollapseIc />
              <ExpandIc />
            </IconRow>
            <FilterBox $mt={4}>Filter</FilterBox>
            <TreeHead $mt={7} $h={22}>
              <HeadCell>Property</HeadCell>
            </TreeHead>
            <TreeArea $line>
              <Row $h={22.3}>
                <Lead $w={9}>
                  <Tri $open />
                </Lead>
                <Lead $w={16} $ml={6}>
                  <Check>
                    <CheckMark />
                  </Check>
                </Lead>
                <Lead $w={20} $ml={9}>
                  <MapWin s={20} />
                </Lead>
                <Label $ml={7}>Map #1</Label>
              </Row>
              <Row $h={22.3} $bg="#efeeec">
                <Lead $w={18} $ml={31}>
                  <GrayTable />
                </Lead>
                <Label $ml={8}>EUCROPMAP_2_prediciton_score</Label>
              </Row>
              <Row $h={22.3}>
                <Lead $w={10} $ml={14}>
                  <Tri $open />
                </Lead>
                <Lead $w={16} $ml={6}>
                  <Check>
                    <CheckMark />
                  </Check>
                </Lead>
                <Lead $w={18} $ml={11}>
                  <Checker />
                </Lead>
                <Label $ml={7}>EUCROPMAP_2_prediction</Label>
              </Row>
              <Row $h={22.3}>
                <Label $ml={45}>Band 1 (Gray)</Label>
              </Row>
              {legend.map(([v, c]) => (
                <Row key={v} $h={22.3}>
                  <Lead $w={20} $ml={45}>
                    <Swatch $c={c} />
                  </Lead>
                  <Label $ml={7}>{v}</Label>
                </Row>
              ))}
              <Row $h={22.3}>
                <Lead $w={16} $ml={15}>
                  <Check>
                    <CheckMark />
                  </Check>
                </Lead>
                <Lead $w={20} $ml={9}>
                  <BlueTable />
                </Lead>
                <Label $ml={12}>EUCROPMAP_2_prediciton_sco...</Label>
              </Row>
            </TreeArea>
          </PanelB>
        </LeftDock>
        <VSplit />
        <CenterDock>
          <MapDock>
            <Side>
              <SideBtn>
                <DockClose />
              </SideBtn>
              <SideBtn>
                <DockFloat />
              </SideBtn>
              <SideTab>
                <SideLabel>Map #1</SideLabel>
              </SideTab>
            </Side>
            <MapView />
          </MapDock>
          <CSplit />
          <AttrDock>
            <Side>
              <SideBtn>
                <DockClose />
              </SideBtn>
              <SideBtn>
                <DockFloat />
              </SideBtn>
              <SideTab>
                <SideLabel>EUCROPMAP_2_prediciton_score</SideLabel>
              </SideTab>
            </Side>
            <AttrBody>
              <AttrTools>
                {attrTools.map((t, i) => (
                  <Slot key={i} $w={t.w}>
                    {t.el}
                  </Slot>
                ))}
              </AttrTools>
              <TableWrap>
                <TablePane>
                  <THead>
                    <Corner />
                    <TH $w={124}>Class</TH>
                    <TH $w={126}>IoU</TH>
                  </THead>
                  {iou.map(([k, v], i) => (
                    <TRow key={k}>
                      <RowNum>{i + 1}</RowNum>
                      <TD $w={124} $alt={i % 2 === 1}>
                        {k}
                      </TD>
                      <TD $w={126} $alt={i % 2 === 1}>
                        {v}
                      </TD>
                    </TRow>
                  ))}
                </TablePane>
                <ScrollBar $w={20}>
                  <ScrollBtn>
                    <UpTri />
                  </ScrollBtn>
                  <ScrollTrack>
                    <ScrollThumb />
                  </ScrollTrack>
                  <ScrollBtn>
                    <DownTri />
                  </ScrollBtn>
                </ScrollBar>
              </TableWrap>
              <FilterBar>
                <FilterLabel>Filter</FilterLabel>
                <FilterInput>Show all features</FilterInput>
                <ApplyBtn>Apply</ApplyBtn>
                <FilterIcon $w={34}>
                  <Funnel s={22} />
                </FilterIcon>
                <FilterIcon $w={26}>
                  <Ic s={18}>
                    <rect x="5" y="2" width="22" height="28" fill="#e6edf5" stroke="#9db4cc" strokeWidth="2" />
                    <rect x="8" y="7" width="6" height="6" fill="#fff" stroke="#8a8a8a" />
                    <rect x="8" y="19" width="6" height="6" fill="#fff" stroke="#8a8a8a" />
                    <path d="M16 10 H24 M16 22 H24" stroke="#7c9cc0" strokeWidth="2" />
                  </Ic>
                </FilterIcon>
                <FilterIcon $w={27} $on>
                  <Ic s={20}>
                    <rect x="4" y="2" width="24" height="28" fill="#d3e2f1" stroke="#6f8fb5" strokeWidth="1.8" />
                    <path d="M4 9 H28 M4 16 H28 M4 23 H28 M14 9 V30" stroke="#6f8fb5" strokeWidth="1.4" />
                  </Ic>
                </FilterIcon>
              </FilterBar>
            </AttrBody>
          </AttrDock>
        </CenterDock>
        <VSplit />
        <RightDock>
          <RightTitle>
            <DockTitleText>Processing Toolbox</DockTitleText>
            <DockBtns>
              <DockBtn>
                <DockFloat />
              </DockBtn>
              <DockBtn>
                <DockClose />
              </DockBtn>
            </DockBtns>
          </RightTitle>
          <RightIcons>
            <ProcGears />
            <PythonIc />
          </RightIcons>
          <SearchBox>
            <SearchGlass />
            <span>Search...</span>
          </SearchBox>
          <RightList>
            <RightTree>
              {qgisGroups.map(g => (
                <Row key={g}>
                  <Lead $w={8} $ml={9}>
                    <Tri />
                  </Lead>
                  <Lead $w={20} $ml={12}>
                    <QLogo s={20} />
                  </Lead>
                  <Label $ml={8}>{g}</Label>
                </Row>
              ))}
              <Row>
                <Lead $w={10} $ml={8}>
                  <Tri $open />
                </Lead>
                <Lead $w={20} $ml={11}>
                  <EnmapLogo />
                </Lead>
                <Label $ml={7}>EnMAP-Box</Label>
              </Row>
              {groupsA.map(g => (
                <Row key={g} $h={20}>
                  <Lead $w={8} $ml={33}>
                    <Tri />
                  </Lead>
                  <Label $ml={13}>{g}</Label>
                </Row>
              ))}
              <Row $h={20}>
                <Lead $w={10} $ml={33}>
                  <Tri $open />
                </Lead>
                <Label $ml={11}>SpecDeepMap</Label>
              </Row>
              {algos.map(a => (
                <Row key={a} $bg={a === 'Deep Learning Mapper' ? '#efefef' : undefined}>
                  <Lead $w={20} $ml={79}>
                    <GearIc s={19} />
                  </Lead>
                  <Label $ml={8}>{a}</Label>
                </Row>
              ))}
              {groupsB.map((g, i) => (
                <Row key={g + i} $h={20}>
                  <Lead $w={8} $ml={33}>
                    <Tri />
                  </Lead>
                  <Label $ml={13}>{g}</Label>
                </Row>
              ))}
              <Row>
                <Lead $w={8} $ml={9}>
                  <Tri />
                </Lead>
                <Lead $w={20} $ml={12}>
                  <QLogo s={20} />
                </Lead>
                <Label $ml={8}>GDAL</Label>
              </Row>
            </RightTree>
            <ScrollBar $w={6}>
              <ScrollTrack>
                <ScrollThumb />
              </ScrollTrack>
            </ScrollBar>
          </RightList>
        </RightDock>
      </Main>
      <Strip />
    </Window>
  )
}
